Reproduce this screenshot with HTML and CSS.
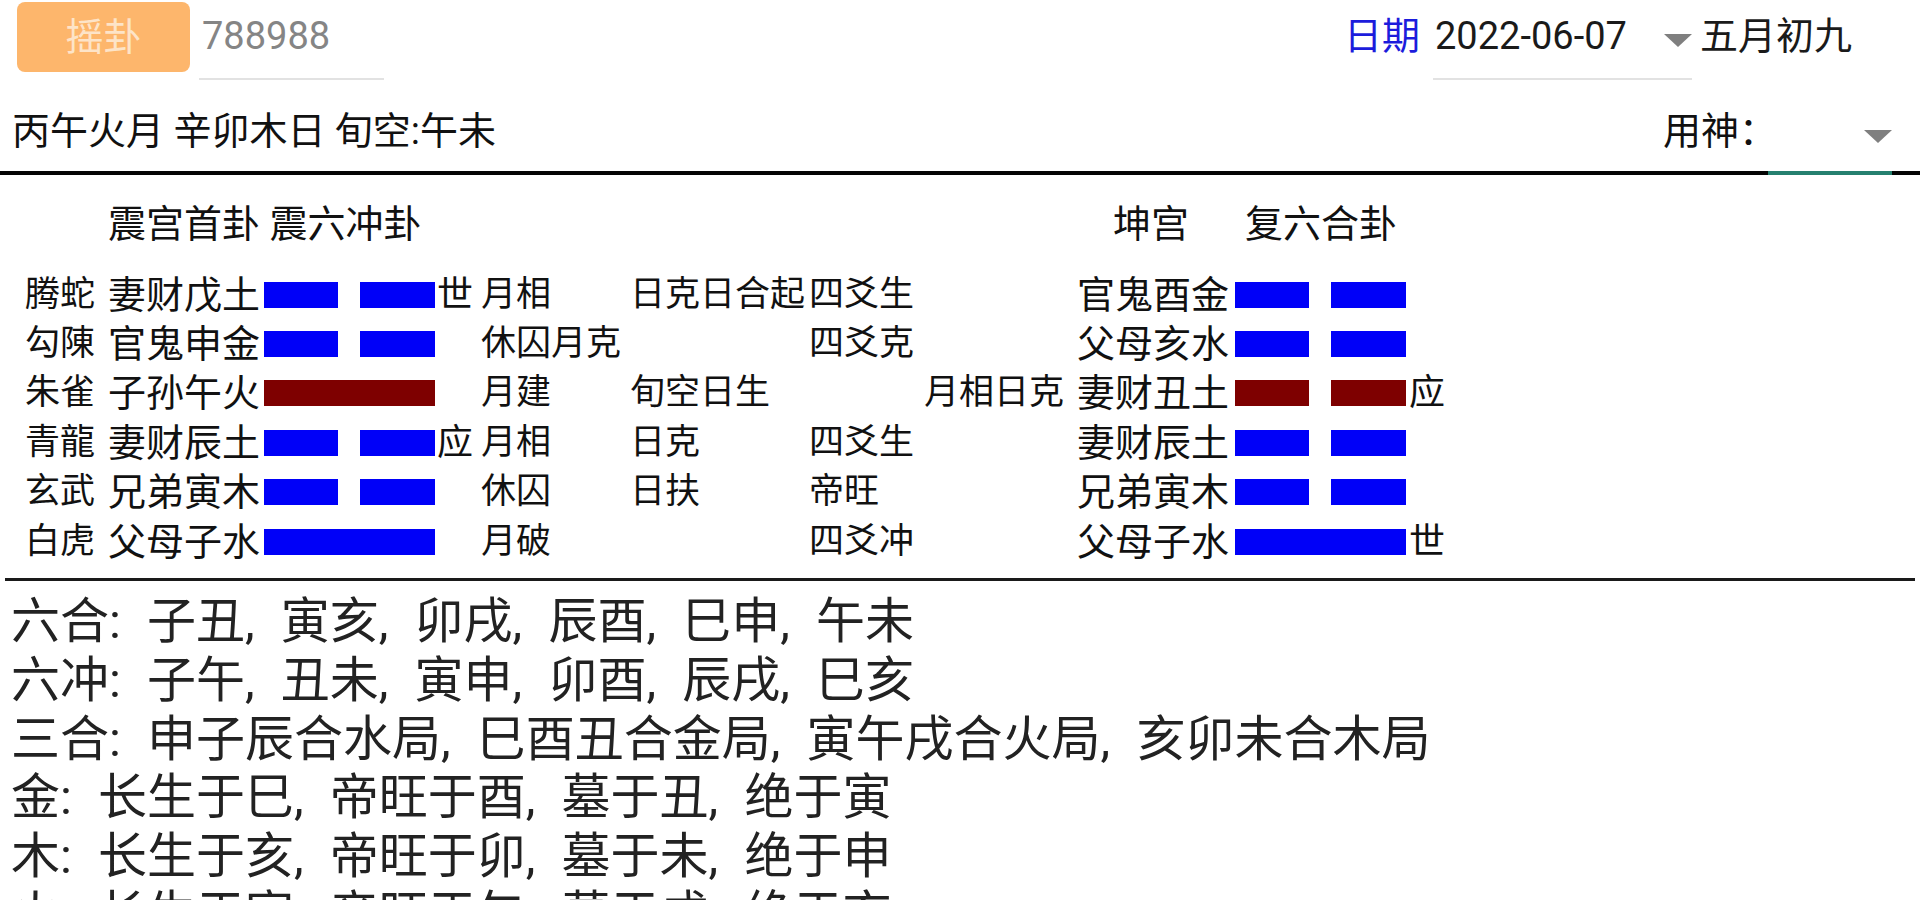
FILE: index.html
```html
<!DOCTYPE html>
<html lang="zh-CN">
<head>
<meta charset="utf-8">
<title>摇卦</title>
<link rel="stylesheet" href="styles.css">
</head>
<body>
<div class="page">
  <header class="bar1">
    <button class="shake">摇卦</button>
    <div class="num">788988</div>
    <div class="spacer"></div>
    <span class="date-label">日期</span>
    <div class="date-field"><span class="date">2022-06-07</span><span class="tri"></span></div>
    <span class="lunar">五月初九</span>
  </header>

  <div class="bar2">
    <span class="ganzhi">丙午火月 辛卯木日 旬空:午未</span>
    <div class="spacer"></div>
    <span class="yongshen">用神：</span>
    <div class="spinner"><span class="tri tri-low"></span></div>
  </div>
  <div class="rule-top"></div>

  <section class="gua">
    <div class="titles">
      <span class="t1">震宫首卦 震六冲卦</span>
      <span class="t2">坤宫</span>
      <span class="t3">复六合卦</span>
    </div>

    <div class="row">
      <span class="god">腾蛇</span><span class="lq">妻财戊土</span>
      <span class="yao yin blue"><i></i><i></i></span>
      <span class="mark">世</span>
      <span class="st yue">月相</span><span class="st ri">日克日合起</span><span class="st sy">四爻生</span>
      <span class="st bst"></span>
      <span class="lq blq">官鬼酉金</span>
      <span class="yao yin blue"><i></i><i></i></span>
      <span class="mark bmark"></span>
    </div>

    <div class="row">
      <span class="god">勾陳</span><span class="lq">官鬼申金</span>
      <span class="yao yin blue"><i></i><i></i></span>
      <span class="mark"></span>
      <span class="st yue">休囚月克</span><span class="st ri"></span><span class="st sy">四爻克</span>
      <span class="st bst"></span>
      <span class="lq blq">父母亥水</span>
      <span class="yao yin blue"><i></i><i></i></span>
      <span class="mark bmark"></span>
    </div>

    <div class="row">
      <span class="god">朱雀</span><span class="lq">子孙午火</span>
      <span class="yao yang red"><i></i></span>
      <span class="mark"></span>
      <span class="st yue">月建</span><span class="st ri">旬空日生</span><span class="st sy"></span>
      <span class="st bst">月相日克</span>
      <span class="lq blq">妻财丑土</span>
      <span class="yao yin red"><i></i><i></i></span>
      <span class="mark bmark">应</span>
    </div>

    <div class="row">
      <span class="god">青龍</span><span class="lq">妻财辰土</span>
      <span class="yao yin blue"><i></i><i></i></span>
      <span class="mark">应</span>
      <span class="st yue">月相</span><span class="st ri">日克</span><span class="st sy">四爻生</span>
      <span class="st bst"></span>
      <span class="lq blq">妻财辰土</span>
      <span class="yao yin blue"><i></i><i></i></span>
      <span class="mark bmark"></span>
    </div>

    <div class="row">
      <span class="god">玄武</span><span class="lq">兄弟寅木</span>
      <span class="yao yin blue"><i></i><i></i></span>
      <span class="mark"></span>
      <span class="st yue">休囚</span><span class="st ri">日扶</span><span class="st sy">帝旺</span>
      <span class="st bst"></span>
      <span class="lq blq">兄弟寅木</span>
      <span class="yao yin blue"><i></i><i></i></span>
      <span class="mark bmark"></span>
    </div>

    <div class="row">
      <span class="god">白虎</span><span class="lq">父母子水</span>
      <span class="yao yang blue"><i></i></span>
      <span class="mark"></span>
      <span class="st yue">月破</span><span class="st ri"></span><span class="st sy">四爻冲</span>
      <span class="st bst"></span>
      <span class="lq blq">父母子水</span>
      <span class="yao yang blue"><i></i></span>
      <span class="mark bmark">世</span>
    </div>
  </section>

  <div class="rule-bottom"></div>

  <section class="notes">
    <p>六合: 子丑, 寅亥, 卯戌, 辰酉, 巳申, 午未</p>
    <p>六冲: 子午, 丑未, 寅申, 卯酉, 辰戌, 巳亥</p>
    <p>三合: 申子辰合水局, 巳酉丑合金局, 寅午戌合火局, 亥卯未合木局</p>
    <p>金: 长生于巳, 帝旺于酉, 墓于丑, 绝于寅</p>
    <p>木: 长生于亥, 帝旺于卯, 墓于未, 绝于申</p>
    <p>火: 长生于寅, 帝旺于午, 墓于戌, 绝于亥</p>
    <p>水: 长生于申, 帝旺于子, 墓于辰, 绝于巳</p>
  </section>
</div>
</body>
</html>
```

FILE: styles.css
```css
* { box-sizing: border-box; }

html, body {
  margin: 0;
  padding: 0;
  background: #ffffff;
}

body {
  width: 1920px;
  height: 900px;
  overflow: hidden;
  font-family: Roboto, "Noto Sans CJK SC", sans-serif;
  color: #111111;
}

.page {
  width: 1920px;
}

/* ---------- header row 1 ---------- */
.bar1 {
  display: flex;
  align-items: flex-start;
  height: 84px;
}

.spacer { flex: 1; }

.shake {
  margin: 2px 0 0 17px;
  width: 173px;
  height: 70px;
  padding: 0;
  border: 0;
  border-radius: 8px;
  background: #fdb66c;
  color: #fde4c8;
  font-family: Roboto, "Noto Sans CJK SC", sans-serif;
  font-size: 38px;
  line-height: 70px;
}

.num {
  margin-left: 9px;
  width: 185px;
  height: 80px;
  padding-left: 3px;
  border-bottom: 2px solid #e2e2e2;
  font-size: 38px;
  line-height: 72px;
  color: #858585;
}

.date-label {
  font-size: 38px;
  line-height: 72px;
  color: #1c1cdc;
}

.date-field {
  display: flex;
  align-items: flex-start;
  margin-left: 13px;
  width: 259px;
  height: 80px;
  padding-left: 2px;
  border-bottom: 2px solid #e2e2e2;
}

.date {
  font-size: 38px;
  line-height: 72px;
  color: #1a1a1a;
}

.tri {
  display: block;
  width: 0;
  height: 0;
  border-left: 14px solid transparent;
  border-right: 14px solid transparent;
  border-top: 13px solid #7f7f7f;
  margin-left: auto;
  margin-top: 34px;
}

.lunar {
  margin-left: 8px;
  margin-right: 68px;
  font-size: 38px;
  line-height: 72px;
  color: #1a1a1a;
}

/* ---------- header row 2 ---------- */
.bar2 {
  display: flex;
  align-items: flex-start;
  height: 87px;
  padding-top: 7px;
}

.ganzhi {
  margin-left: 12px;
  font-size: 38px;
  line-height: 80px;
  color: #111111;
}

.yongshen {
  width: 105px;
  white-space: nowrap;
  font-size: 38px;
  line-height: 80px;
  color: #111111;
}

.spinner {
  position: relative;
  display: flex;
  width: 124px;
  height: 80px;
  margin-right: 28px;
}

.spinner::after {
  content: "";
  position: absolute;
  left: 0;
  right: 0;
  bottom: -4px;
  height: 4px;
  background: #25806f;
}

.tri-low { margin-top: 39px; }

.rule-top {
  height: 4px;
  background: #050505;
}

/* ---------- hexagram table ---------- */
.titles {
  display: flex;
  height: 95px;
  padding-top: 30px;
  font-size: 38px;
  line-height: 38px;
  color: #111111;
}

.t1 { margin-left: 108px; width: 1005px; }
.t2 { width: 132px; }

.row {
  display: grid;
  grid-template-columns: 83px 156px 171px 46px 149px 179px 111px 157px 158px 171px 60px;
  align-items: center;
  height: 49.4px;
  padding-left: 25px;
  color: #111111;
  white-space: nowrap;
}

.god { font-size: 35px; line-height: 40px; }
.lq { font-size: 38px; line-height: 40px; }
.mark { font-size: 36px; line-height: 40px; padding-left: 2px; }
.bmark { padding-left: 3px; }
.st { font-size: 35px; line-height: 40px; }
.bst { text-align: right; padding-right: 13px; }

.yao {
  display: flex;
  justify-content: space-between;
  height: 26px;
}

.yao i { display: block; height: 26px; }
.yin i { width: 74px; }
.yin i + i { width: 75px; }
.yang i { width: 171px; }

.blue i { background: #0000f8; }
.red i { background: #7e0000; }

.rule-bottom {
  height: 3px;
  margin: 12px 5px 0 5px;
  background: #1a1a1a;
}

/* ---------- notes ---------- */
.notes {
  padding: 12px 0 0 11px;
  font-size: 49px;
  line-height: 58.6px;
  word-spacing: 14px;
  color: #222222;
}

.notes p {
  margin: 0;
  white-space: nowrap;
}
```
